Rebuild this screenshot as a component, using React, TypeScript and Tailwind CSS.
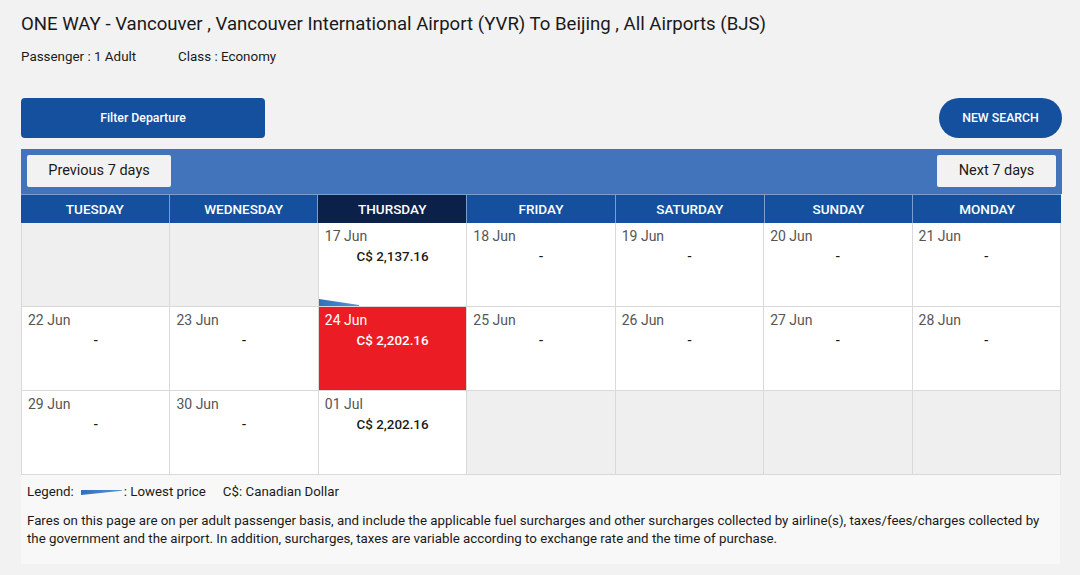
type Cell = { date?: string; price?: string; active?: boolean; lowest?: boolean };

const days = ["TUESDAY", "WEDNESDAY", "THURSDAY", "FRIDAY", "SATURDAY", "SUNDAY", "MONDAY"];

const cells: Cell[] = [
  {},
  {},
  { date: "17 Jun", price: "C$ 2,137.16", lowest: true },
  { date: "18 Jun", price: "-" },
  { date: "19 Jun", price: "-" },
  { date: "20 Jun", price: "-" },
  { date: "21 Jun", price: "-" },
  { date: "22 Jun", price: "-" },
  { date: "23 Jun", price: "-" },
  { date: "24 Jun", price: "C$ 2,202.16", active: true },
  { date: "25 Jun", price: "-" },
  { date: "26 Jun", price: "-" },
  { date: "27 Jun", price: "-" },
  { date: "28 Jun", price: "-" },
  { date: "29 Jun", price: "-" },
  { date: "30 Jun", price: "-" },
  { date: "01 Jul", price: "C$ 2,202.16" },
  {},
  {},
  {},
  {},
];

function Wedge({ className }: { className?: string }) {
  return (
    <svg className={className} viewBox="0 0 40 7" preserveAspectRatio="none">
      <defs>
        <linearGradient id="wg" x1="0" x2="1" y1="0" y2="0">
          <stop offset="0" stopColor="#2f6fc0" />
          <stop offset="1" stopColor="#5a93d4" />
        </linearGradient>
      </defs>
      <polygon points="0,0 40,6 40,7 0,7" fill="url(#wg)" />
    </svg>
  );
}

export default function App() {
  return (
    <div className="min-h-[575px] bg-[#f2f2f2] px-[21px] pt-[12px] font-['Roboto',sans-serif] text-[#1a1a1a]">
      {/* Title */}
      <h1 className="text-[18.6px] leading-[24px]">
        ONE WAY - Vancouver , Vancouver International Airport (YVR) To Beijing , All Airports (BJS)
      </h1>
      <div className="mt-[12px] flex text-[13.4px] leading-[17px]">
        <span className="w-[157px]">Passenger : 1 Adult</span>
        <span>Class : Economy</span>
      </div>

      {/* Actions */}
      <div className="mt-[33px] flex w-[1041px] items-center justify-between">
        <button className="h-[40px] w-[244px] rounded-[4px] bg-[#14509e] text-[12.3px] font-medium text-white">
          Filter Departure
        </button>
        <button className="h-[40px] w-[123px] rounded-full bg-[#14509e] text-[12.3px] font-medium text-white">
          NEW SEARCH
        </button>
      </div>

      {/* Calendar */}
      <div className="mt-[11px] w-[1041px]">
        <div className="flex h-[45px] items-start justify-between bg-[#4174ba] px-[6px] pt-[6px]">
          <button className="h-[32px] w-[144px] rounded-[2px] bg-[#f2f2f2] text-[14.5px] text-[#1a1a1a]">
            Previous 7 days
          </button>
          <button className="h-[32px] w-[119px] rounded-[2px] bg-[#f2f2f2] text-[14.5px] text-[#1a1a1a]">
            Next 7 days
          </button>
        </div>
        <div className="grid w-[1040px] grid-cols-7 gap-x-px bg-[#7b9dd0] pt-px">
          {days.map((d) => (
            <div
              key={d}
              className={
                d === "THURSDAY"
                  ? "flex h-[28px] items-center justify-center bg-[#0c2149] text-[13.5px] font-medium text-white"
                  : "flex h-[28px] items-center justify-center bg-[#14509e] text-[13.5px] font-medium text-white"
              }
            >
              {d}
            </div>
          ))}
        </div>
        <div className="grid w-[1040px] grid-cols-7 gap-px bg-[#d9d9d9] px-px pb-px">
          {cells.map((c, i) => {
            if (!c.date) return <div key={i} className="h-[83px] bg-[#efefef]" />;
            return (
              <div
                key={i}
                className={
                  c.active
                    ? "relative h-[83px] bg-[#ec1c24] px-[6px] pt-[5px] text-white"
                    : "relative h-[83px] bg-white px-[6px] pt-[5px]"
                }
              >
                <div className={c.active ? "text-[14px] leading-[17px]" : "text-[14px] leading-[17px] text-[#555]"}>
                  {c.date}
                </div>
                <div className="mt-[3px] text-center text-[13.4px] font-medium leading-[17px]">{c.price}</div>
                {c.lowest && <Wedge className="absolute bottom-0 left-0 h-[7px] w-[40px]" />}
              </div>
            );
          })}
        </div>

        {/* Legend */}
        <div className="h-[89px] w-[1039px] bg-[#f8f8f8] px-[6px] pt-[8px] text-[13.3px] leading-[18px] text-[#1a1a1a]">
          <div className="flex items-center">
            <span>Legend:</span>
            <Wedge className="ml-[7px] h-[5px] w-[41px] -scale-y-100" />
            <span className="ml-[2px]">: Lowest price</span>
            <span className="ml-[17px]">C$: Canadian Dollar</span>
          </div>
          <p className="mt-[11px]">
            Fares on this page are on per adult passenger basis, and include the applicable fuel surcharges and other
            surcharges collected by airline(s), taxes/fees/charges collected by the government and the airport. In
            addition, surcharges, taxes are variable according to exchange rate and the time of purchase.
          </p>
        </div>
      </div>
    </div>
  );
}
